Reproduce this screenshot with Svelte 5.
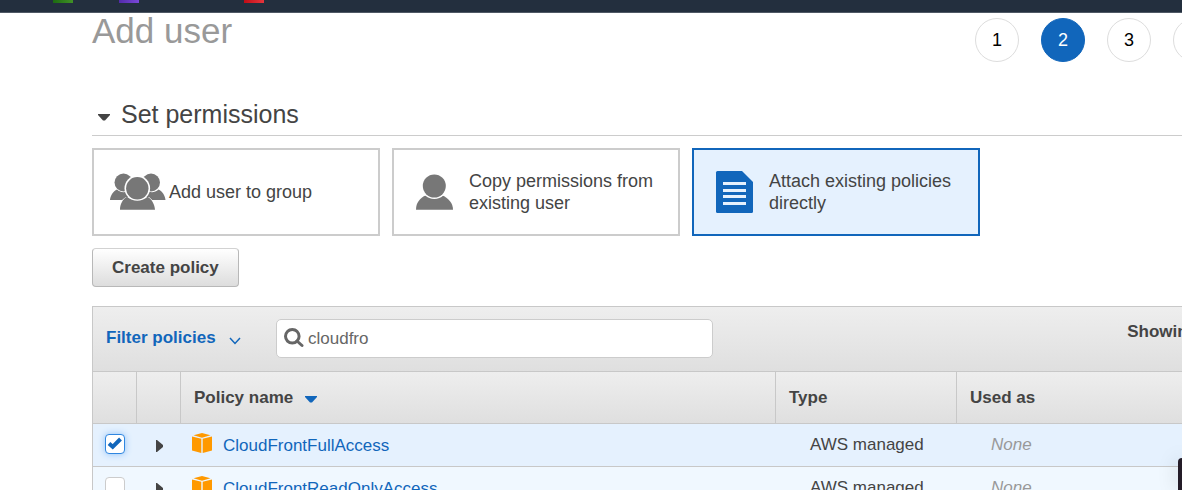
<script>
  const shortcuts = [
    { name: 'green', gap: 53 },
    { name: 'purple', gap: 46 },
    { name: 'red', gap: 105 },
  ];
  const steps = [1, 2, 3, 4];
  const current = 2;

  const modes = [
    { id: 'group', label: 'Add user to group' },
    { id: 'copy', label: 'Copy permissions from existing user' },
    { id: 'attach', label: 'Attach existing policies directly' },
  ];
  let mode = $state('attach');
  let query = $state('cloudfro');
  let policies = $state([
    { name: 'CloudFrontFullAccess', type: 'AWS managed', used: 'None', checked: true },
    { name: 'CloudFrontReadOnlyAccess', type: 'AWS managed', used: 'None', checked: false },
  ]);
</script>

<div class="page">
  <header class="topbar">
    {#each shortcuts as s}
      <span class="shortcut {s.name}" style="margin-left: {s.gap}px"></span>
    {/each}
  </header>

  <main>
    <div class="title-row">
      <h1>Add user</h1>
      <ol class="steps">
        {#each steps as step}
          <li class:current={step === current}>{step}</li>
        {/each}
      </ol>
    </div>

    <h2>
      <svg class="caret" viewBox="0 0 12 7" aria-hidden="true"><path d="M0 0h12v1L7 6.500H5L0 1z" /></svg>
      Set permissions
    </h2>

    <div class="modes">
      {#each modes as m}
        <button class="mode" class:active={mode === m.id} onclick={() => (mode = m.id)}>
          <svg class="mode-icon" viewBox="0 0 75 60" aria-hidden="true">
            {#if m.id === 'group'}
              <circle cx="29.500" cy="20.500" r="9" />
              <circle cx="57" cy="20.500" r="9" />
              <path d="M16 38c.5-4.500 3-8.500 7-10.500 4 3.500 9 3.500 13 0l5 3V38zM71.500 38c-.5-4.500-3-8.500-7-10.500-4 3.500-9 3.500-13 0l-5 3V38z" />
              <path class="gap" d="M24 49c0-6 3-11 8-14h23c4 3 7 8 7.500 14z" />
              <circle class="gap" cx="43.300" cy="26.300" r="12.800" />
              <circle cx="43.300" cy="26.300" r="11.200" />
              <path d="M26 47.700c0-5.500 2.500-10.500 7-13 6 5.500 14.500 5.500 20.500 0 4.500 2.500 7 7.500 7.500 13z" />
            {:else if m.id === 'copy'}
              <path d="M22 47.700c0-6.500 3.500-11.500 9.500-14.200h17c6 2.700 10.500 7.700 10.500 14.200z" />
              <circle class="gap" cx="40.300" cy="24" r="13" />
              <circle cx="40.300" cy="24" r="11.500" />
            {:else}
              <path d="M23.500 9H48l11 11v29.500q0 1.500-1.500 1.500h-34q-1.500 0-1.500-1.500v-39Q22 9 23.500 9z" />
              <path class="gap" d="M29 20h23v3H29zM29 27h23v3H29zM29 33h23v3H29zM29 40h23v3H29z" />
            {/if}
          </svg>
          <span>{m.label}</span>
        </button>
      {/each}
    </div>

    <button class="create">Create policy</button>

    <section class="panel">
      <div class="toolbar">
        <button class="filter">
          Filter policies
          <svg viewBox="0 0 12 8" aria-hidden="true"><path d="M1 1l5 5.500L11 1" /></svg>
        </button>
        <label class="search">
          <svg viewBox="0 0 20 20" aria-hidden="true">
            <circle cx="8.300" cy="8.300" r="6.800" />
            <path d="M13 13l5 4.500" />
          </svg>
          <input type="text" aria-label="Search" bind:value={query} />
        </label>
        <span class="count">Showing</span>
      </div>

      <table>
        <colgroup>
          <col class="narrow" /><col class="narrow" /><col /><col class="type" /><col class="used" />
        </colgroup>
        <thead>
          <tr>
            <th></th>
            <th></th>
            <th>
              Policy name
              <svg class="caret sort" viewBox="0 0 12 7" aria-hidden="true"><path d="M0 0h12v1L7 6.500H5L0 1z" /></svg>
            </th>
            <th>Type</th>
            <th>Used as</th>
          </tr>
        </thead>
        <tbody>
          {#each policies as p}
            <tr class:selected={p.checked}>
              <td>
                <span class="check">
                  <input type="checkbox" aria-label={p.name} bind:checked={p.checked} />
                  {#if p.checked}
                    <svg viewBox="0 0 20 20" aria-hidden="true"><path d="M4 9.500l3.700 3.300L15.500 5" /></svg>
                  {/if}
                </span>
              </td>
              <td>
                <button class="expand" aria-label="Expand">
                  <svg viewBox="0 0 7 12" aria-hidden="true"><path d="M0 0h1l6 5v2l-6 5H0z" /></svg>
                </button>
              </td>
              <td>
                <div class="name">
                  <svg viewBox="0 0 20 20" aria-hidden="true">
                    <path d="M10 0l8.500 2.300L10 4.800 1.500 2.300zM0 3.500l9.300 2.300V20L0 17.500zM20 3.500l-9.300 2.300V20l9.300-2.500z" />
                  </svg>
                  <a href="#policy">{p.name}</a>
                </div>
              </td>
              <td class="inset">{p.type}</td>
              <td class="inset none">{p.used}</td>
            </tr>
          {/each}
        </tbody>
      </table>
    </section>
  </main>
  <div class="floating"></div>
</div>

<style>
  .page {
    position: relative;
    height: 100vh;
    overflow: hidden;
    background: #fff;
    color: #444;
    font: 17px/22px "Liberation Sans", Arial, sans-serif;
  }
  button, input { font: inherit; color: inherit; margin: 0; }
  button { cursor: pointer; }
  svg { display: block; flex: none; }

  .topbar {
    display: flex;
    height: 12px;
    background: #232f3e;
    border-bottom: 1px solid #4f5965;
  }
  .shortcut { width: 20px; height: 3px; }
  .green { background: linear-gradient(90deg, #1d6b12, #419126); }
  .purple { background: linear-gradient(90deg, #522ba9, #7a48d8); }
  .red { background: linear-gradient(90deg, #c00d16, #e5353c); }

  main { margin: 0 -35px 0 92px; }

  .title-row { display: flex; justify-content: space-between; align-items: flex-start; }
  h1 { margin: 0; font-size: 35px; line-height: 36px; font-weight: 400; color: #999; }
  .steps { display: flex; gap: 22px; margin: 5px 0 0; padding: 0; list-style: none; }
  .steps li {
    box-sizing: border-box;
    width: 44px;
    height: 44px;
    border: 1px solid #ddd;
    border-radius: 50%;
    color: #000;
    font-size: 18px;
    line-height: 42px;
    text-align: center;
  }
  .steps .current { background: #1166bb; border-color: #1166bb; color: #fff; }

  h2 {
    display: flex;
    align-items: center;
    gap: 11px;
    margin: 37px 0 12px;
    padding: 0 0 6px 6px;
    border-bottom: 1px solid #ccc;
    font-size: 25px;
    line-height: 30px;
    font-weight: 400;
  }
  .caret { width: 12px; height: 7px; fill: #444; }
  h2 .caret { margin-top: 7px; }

  .modes { display: flex; gap: 12px; }
  .mode {
    display: flex;
    align-items: center;
    box-sizing: border-box;
    width: 288px;
    height: 88px;
    padding: 0 20px 0 0;
    border: 2px solid #ccc;
    background: #fff;
    font-size: 18px;
    text-align: left;
  }
  .mode-icon { width: 75px; height: 60px; fill: #777; }
  .mode-icon .gap { fill: #fff; }
  .active { border-color: #1166bb; background: #e5f1fe; }
  .active .mode-icon { fill: #1166bb; }
  .active .mode-icon .gap { fill: #e5f1fe; }

  .create {
    display: block;
    height: 39px;
    margin: 12px 0 19px;
    padding: 0 19px;
    border: 1px solid #b8b8b8;
    border-top-color: #d2d2d2;
    border-radius: 4px;
    background: linear-gradient(#fff, #ddd);
    font-weight: 700;
  }

  .panel { border: 1px solid #c8c8c8; }
  .toolbar {
    display: flex;
    align-items: flex-start;
    height: 39px;
    padding: 12px 18px 13px 13px;
    background: linear-gradient(#eee, #dfdfdf);
  }
  .filter {
    display: flex;
    align-items: center;
    gap: 13px;
    width: 170px;
    height: 38px;
    padding: 0;
    border: 0;
    background: none;
    color: #1166bb;
    font-weight: 700;
    text-align: left;
  }
  .filter svg { width: 12px; height: 8px; margin-top: 5px; fill: none; stroke: #1166bb; stroke-width: 1.500; }
  .search {
    display: flex;
    align-items: center;
    gap: 4px;
    box-sizing: border-box;
    width: 437px;
    height: 39px;
    padding: 0 7px;
    border: 1px solid #ccc;
    border-radius: 5px;
    background: #fff;
    color: #666;
  }
  .search svg { width: 20px; height: 20px; margin-bottom: 2px; fill: none; stroke: #666; stroke-width: 3; }
  .search path { stroke-width: 3; stroke-linecap: round; }
  .search input { flex: 1; min-width: 0; padding: 0; border: 0; outline: 0; background: none; }
  .count { margin-left: auto; padding-top: 2px; font-weight: 700; }

  table { width: 100%; table-layout: fixed; border-collapse: separate; border-spacing: 0; }
  .narrow { width: 44px; }
  .type { width: 181px; }
  .used { width: 259px; }
  th {
    height: 51px;
    padding: 0 13px;
    border: solid #c8c8c8;
    border-width: 1px 1px 1px 0;
    background: linear-gradient(#eee, #dfdfdf);
    text-align: left;
  }
  th:last-child { border-right: 0; }
  .sort { display: inline-block; margin-left: 7px; fill: #1166bb; }
  td { height: 42px; padding: 0 11px; border-bottom: 1px solid #c8c8c8; background: #f0f8ff; }
  td:first-child { padding-left: 12px; }
  .selected td { background: #e5f1fe; }
  td.inset { padding-left: 34px; }
  .none { color: #999; font-style: italic; }

  .check { display: grid; width: 20px; height: 20px; margin-bottom: 2px; }
  .check > * { grid-area: 1 / 1; }
  .check input {
    appearance: none;
    box-sizing: border-box;
    width: 20px;
    height: 20px;
    border: 1px solid #ccc;
    border-radius: 4px;
    background: #fff;
  }
  .check input:checked { border-color: #2f86e0; box-shadow: 0 0 7px #8fc2f8; }
  .check svg { width: 20px; height: 20px; fill: none; stroke: #1166bb; stroke-width: 4; pointer-events: none; }
  .expand { display: block; margin: 2px 0 0 8px; padding: 0; border: 0; background: none; }
  .expand svg { width: 7px; height: 12px; fill: #444; }
  .name { display: flex; align-items: center; gap: 11px; padding-top: 1px; }
  .name svg { width: 20px; height: 20px; margin-bottom: 6px; fill: #ff9900; }
  a { color: #1166bb; text-decoration: none; }

  .floating {
    position: absolute;
    right: 0;
    bottom: 0;
    width: 4px;
    height: 32px;
    border-top-left-radius: 4px;
    background: #241c28;
    box-shadow: 0 0 18px rgba(0, 0, 0, 0.25);
  }
</style>
